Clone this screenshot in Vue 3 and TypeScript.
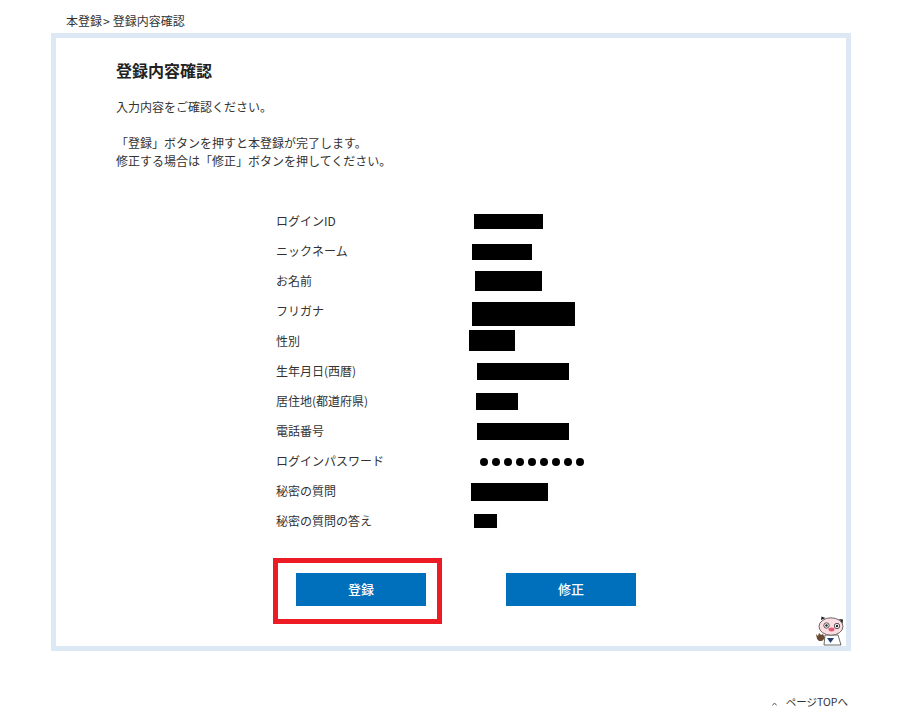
<script setup lang="ts">
interface Row {
  label: string
  x?: number
  w?: number
  h?: number
  dy?: number
  dots?: boolean
}

const rows: Row[] = [
  { label: 'ログインID', x: 14, w: 69, h: 15, dy: 0 },
  { label: 'ニックネーム', x: 12, w: 60, h: 16, dy: 1 },
  { label: 'お名前', x: 15, w: 67, h: 20, dy: 0 },
  { label: 'フリガナ', x: 12, w: 103, h: 24, dy: 3 },
  { label: '性別', x: 9, w: 46, h: 21, dy: -0.5 },
  { label: '生年月日(西暦)', x: 17, w: 92, h: 17, dy: 0 },
  { label: '居住地(都道府県)', x: 16, w: 42, h: 17, dy: 0 },
  { label: '電話番号', x: 17, w: 92, h: 17, dy: 0 },
  { label: 'ログインパスワード', dots: true },
  { label: '秘密の質問', x: 11, w: 77, h: 18, dy: 1 },
  { label: '秘密の質問の答え', x: 14, w: 23, h: 14, dy: 0 },
]

const dots = Array.from({ length: 9 }, (_, i) => i)

function barStyle(r: Row) {
  return {
    marginLeft: `${r.x}px`,
    width: `${r.w}px`,
    height: `${r.h}px`,
    marginTop: `${(r.dy ?? 0) * 2}px`,
  }
}
</script>

<template>
  <div class="page">
    <div class="crumb">本登録<span class="sep">&gt;</span>登録内容確認</div>
    <main class="frame">
      <h1 class="title">登録内容確認</h1>
      <p class="lead">入力内容をご確認ください。</p>
      <p class="note">
        「登録」ボタンを押すと本登録が完了します。<br />修正する場合は「修正」ボタンを押してください。
      </p>
      <dl class="rows">
        <div v-for="r in rows" :key="r.label" class="row">
          <dt class="label">{{ r.label }}</dt>
          <dd class="value">
            <span v-if="r.dots" class="dots">
              <i v-for="d in dots" :key="d" class="dot"></i>
            </span>
            <span v-else class="bar" :style="barStyle(r)"></span>
          </dd>
        </div>
      </dl>
      <div class="actions">
        <div class="primary-wrap">
          <span class="highlight"></span>
          <button class="btn" type="button">登録</button>
        </div>
        <button class="btn" type="button">修正</button>
      </div>
      <svg class="pig" viewBox="0 0 30 30" width="30" height="30" aria-hidden="true">
        <path d="M1 23 L0 18 L2 20 L3 17 L5 19 L7 18 L9 22 L6 25 L3 25 Z" fill="#6b4a34" />
        <path d="M9 19 L22 19 L25 29 L8 29 Z" fill="#fff" stroke="#444" stroke-width="0.8" />
        <path d="M11 22 L18 22 L14.5 27 Z" fill="#22406e" />
        <path d="M5 4 L5.5 0.5 L9.5 2 Z" fill="#222" />
        <path d="M23 3 L27 3.5 L26.5 8 Z" fill="#222" />
        <ellipse cx="15" cy="10.5" rx="12" ry="8.7" fill="#fbdde2" stroke="#444" stroke-width="0.8" />
        <circle cx="10.5" cy="9.5" r="2.7" fill="#fff" stroke="#444" stroke-width="0.9" />
        <circle cx="10.5" cy="9.5" r="1.2" fill="#222" />
        <circle cx="21" cy="10" r="2.7" fill="#fff" stroke="#444" stroke-width="0.9" />
        <circle cx="21" cy="10" r="1.2" fill="#222" />
        <ellipse cx="15.5" cy="13.5" rx="3" ry="1.9" fill="#e8566f" />
      </svg>
    </main>
    <div class="foot">
      <a class="top-link" href="#">
        <svg class="chev" viewBox="0 0 5 4" width="5" height="4" aria-hidden="true">
          <path d="M0.3 3.5 L2.5 1 L4.7 3.5" fill="none" stroke="#555" stroke-width="1" />
        </svg>
        ページTOPへ
      </a>
    </div>
  </div>
</template>

<style scoped>
.page {
  width: 897px;
  height: 715px;
  overflow: hidden;
  background: #fff;
  color: #333;
  font-family: "Noto Sans CJK JP", "Liberation Sans", sans-serif;
  font-size: 12px;
  font-weight: 400;
}
.crumb {
  height: 33px;
  padding: 12px 0 0 66px;
  box-sizing: border-box;
  line-height: 18px;
  font-size: 12px;
  white-space: nowrap;
}
.sep {
  margin: 0 3px 0 1px;
}
.frame {
  position: relative;
  box-sizing: border-box;
  width: 800px;
  height: 618px;
  margin-left: 51px;
  border: 5px solid #dce8f4;
  padding: 22px 0 0 60px;
}
.title {
  margin: 0;
  font-size: 16px;
  line-height: 20px;
  font-weight: 700;
  color: #222;
}
.lead,
.note {
  margin: 0;
  line-height: 18px;
}
.lead {
  margin-top: 18px;
}
.note {
  margin-top: 18px;
}
.rows {
  margin: 36px 0 0 160px;
}
.row {
  display: flex;
  height: 30px;
  align-items: center;
}
.label {
  width: 184px;
  line-height: 18px;
  white-space: nowrap;
}
.value {
  margin: 0;
  display: flex;
  align-items: center;
  height: 30px;
}
.bar {
  display: block;
  background: #000;
}
.dots {
  display: flex;
  gap: 4px;
  margin-left: 20px;
  margin-top: 1px;
}
.dot {
  display: block;
  width: 8px;
  height: 8px;
  border-radius: 50%;
  background: #000;
}
.actions {
  display: flex;
  gap: 80px;
  margin: 37px 0 0 180px;
}
.primary-wrap {
  position: relative;
}
.highlight {
  position: absolute;
  left: -23px;
  top: -15px;
  width: 169px;
  height: 66px;
  box-sizing: border-box;
  border: 5px solid #ed1c24;
}
.btn {
  display: block;
  width: 130px;
  height: 33px;
  border: 0;
  padding: 0 0 2px;
  background: #006fbc;
  color: #fff;
  font-family: inherit;
  font-size: 13px;
  font-weight: 500;
}
.pig {
  position: absolute;
  right: 0;
  bottom: 0;
}
.foot {
  display: flex;
  justify-content: flex-end;
  padding: 42px 49px 0 0;
}
.top-link {
  display: flex;
  align-items: center;
  gap: 9px;
  color: #333;
  text-decoration: none;
  font-size: 10.5px;
  line-height: 18px;
}
.chev {
  margin-top: 3px;
}
</style>
